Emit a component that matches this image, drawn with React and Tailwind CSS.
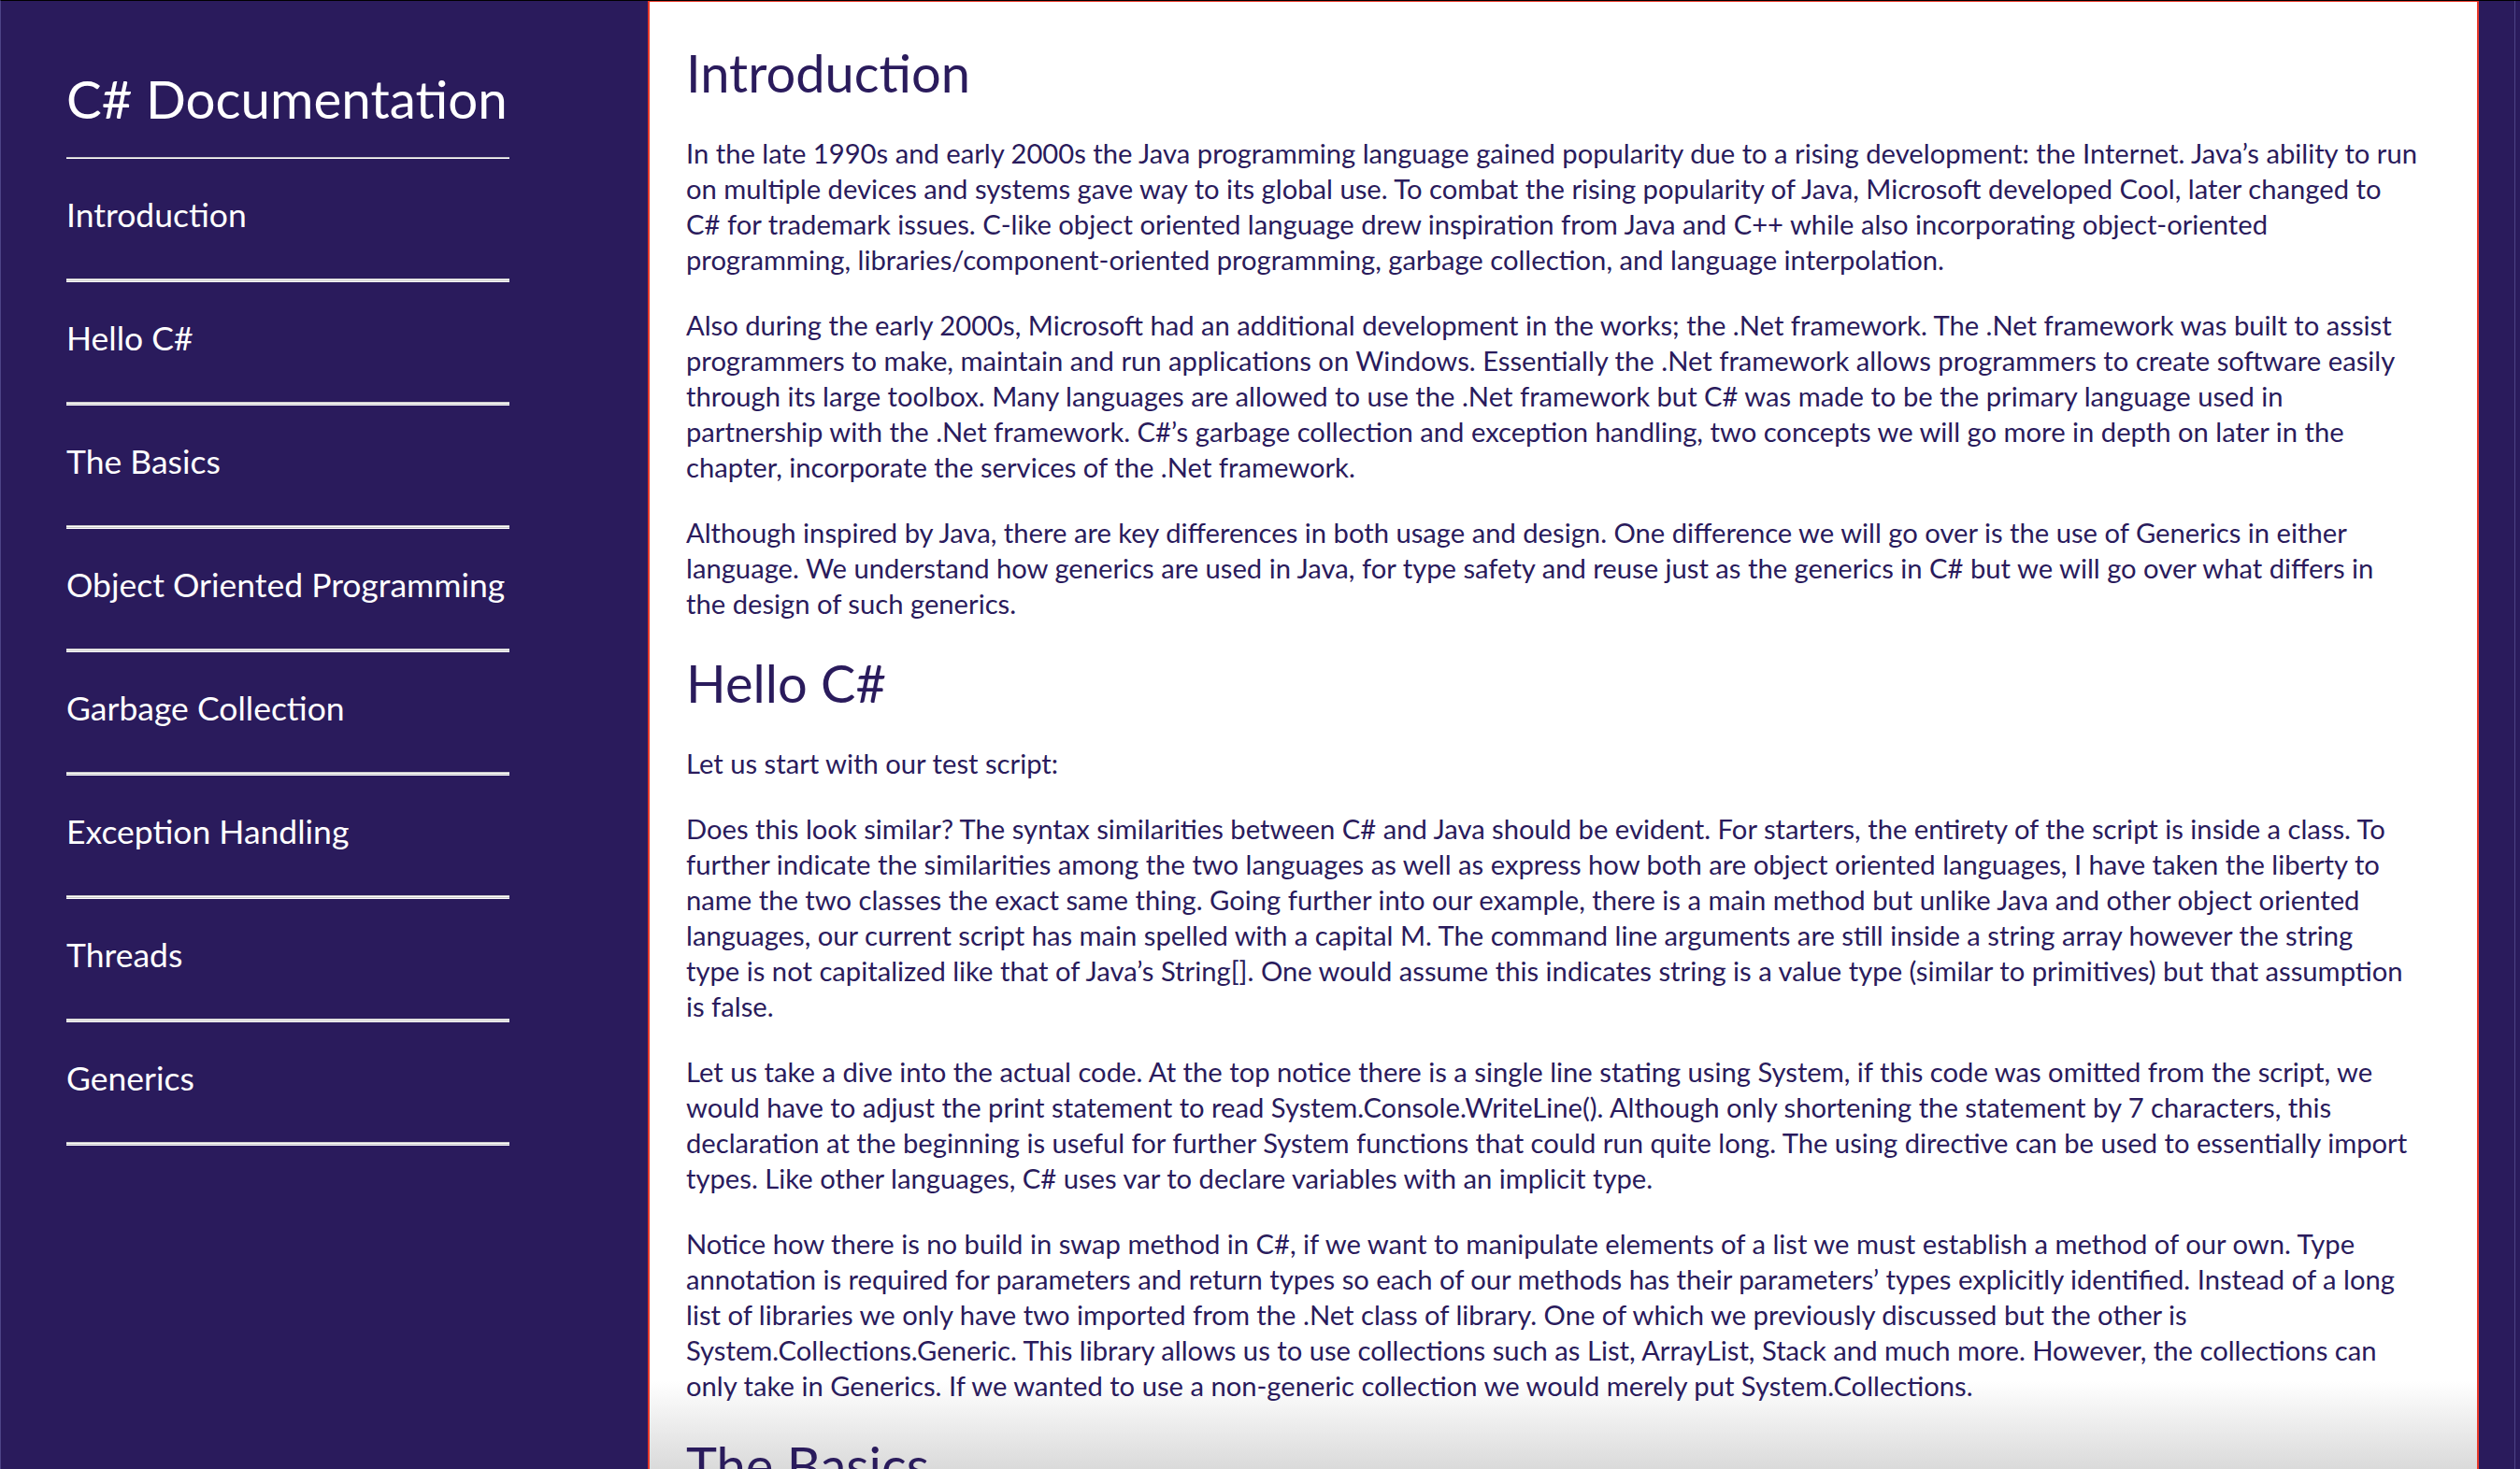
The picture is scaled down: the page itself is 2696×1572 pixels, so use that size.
import React from 'react';

const NAV_ITEMS = [
  'Introduction',
  'Hello C#',
  'The Basics',
  'Object Oriented Programming',
  'Garbage Collection',
  'Exception Handling',
  'Threads',
  'Generics',
];

// Paragraphs are kept as their rendered lines so the wrapping follows the original page
const INTRO = [
  [
    'In the late 1990s and early 2000s the Java programming language gained popularity due to a rising development: the Internet. Java’s ability to run',
    'on multiple devices and systems gave way to its global use. To combat the rising popularity of Java, Microsoft developed Cool, later changed to',
    'C# for trademark issues. C-like object oriented language drew inspiration from Java and C++ while also incorporating object-oriented',
    'programming, libraries/component-oriented programming, garbage collection, and language interpolation.',
  ],
  [
    'Also during the early 2000s, Microsoft had an additional development in the works; the .Net framework. The .Net framework was built to assist',
    'programmers to make, maintain and run applications on Windows. Essentially the .Net framework allows programmers to create software easily',
    'through its large toolbox. Many languages are allowed to use the .Net framework but C# was made to be the primary language used in',
    'partnership with the .Net framework. C#’s garbage collection and exception handling, two concepts we will go more in depth on later in the',
    'chapter, incorporate the services of the .Net framework.',
  ],
  [
    'Although inspired by Java, there are key differences in both usage and design. One difference we will go over is the use of Generics in either',
    'language. We understand how generics are used in Java, for type safety and reuse just as the generics in C# but we will go over what differs in',
    'the design of such generics.',
  ],
];

const HELLO = [
  ['Let us start with our test script:'],
  [
    'Does this look similar? The syntax similarities between C# and Java should be evident. For starters, the entirety of the script is inside a class. To',
    'further indicate the similarities among the two languages as well as express how both are object oriented languages, I have taken the liberty to',
    'name the two classes the exact same thing. Going further into our example, there is a main method but unlike Java and other object oriented',
    'languages, our current script has main spelled with a capital M. The command line arguments are still inside a string array however the string',
    'type is not capitalized like that of Java’s String[]. One would assume this indicates string is a value type (similar to primitives) but that assumption',
    'is false.',
  ],
  [
    'Let us take a dive into the actual code. At the top notice there is a single line stating using System, if this code was omitted from the script, we',
    'would have to adjust the print statement to read System.Console.WriteLine(). Although only shortening the statement by 7 characters, this',
    'declaration at the beginning is useful for further System functions that could run quite long. The using directive can be used to essentially import',
    'types. Like other languages, C# uses var to declare variables with an implicit type.',
  ],
  [
    'Notice how there is no build in swap method in C#, if we want to manipulate elements of a list we must establish a method of our own. Type',
    'annotation is required for parameters and return types so each of our methods has their parameters’ types explicitly identified. Instead of a long',
    'list of libraries we only have two imported from the .Net class of library. One of which we previously discussed but the other is',
    'System.Collections.Generic. This library allows us to use collections such as List, ArrayList, Stack and much more. However, the collections can',
    'only take in Generics. If we wanted to use a non-generic collection we would merely put System.Collections.',
  ],
];

function Section({ title, paragraphs, first }) {
  return (
    <section>
      <h2 className={`${first ? '' : 'mt-[34px]'} mb-[35px] text-[56px] leading-[64px] font-normal`}>{title}</h2>
      {paragraphs.map((lines, i) => (
        <p key={i} className="mb-[32px] text-[29.2px] leading-[38px] whitespace-nowrap">
          {lines.map((line, j) => (
            <React.Fragment key={j}>
              {j > 0 && <br />}
              {line}
            </React.Fragment>
          ))}
        </p>
      ))}
    </section>
  );
}

export default function App() {
  return (
    <div
      className="flex h-[1572px] w-full overflow-hidden border-t border-t-black border-l border-l-[#4d4386] bg-[#2a1b5c]"
      style={{ fontFamily: 'Lato, "Open Sans", sans-serif' }}
    >
      {/* Sidebar */}
      <nav className="w-[692px] shrink-0 pl-[70px] pr-[148px] text-white">
        <h1 className="mt-[72px] mb-[31px] text-[56.5px] leading-[64px] font-normal whitespace-nowrap">C# Documentation</h1>
        <div className="h-[2px] border-t border-t-[#c4c4c4] bg-white" />
        {NAV_ITEMS.map((item) => (
          <div key={item}>
            <a href="#" className="block pt-[38px] pb-[46px] text-[35.5px] leading-[44px] whitespace-nowrap">
              {item}
            </a>
            <div className="h-[2px] border-t border-t-[#c4c4c4] bg-white" />
            <div className="h-[2px] border-t border-t-[#c4c4c4] bg-white" />
          </div>
        ))}
      </nav>

      {/* Main content */}
      <main className="flex-1 overflow-hidden border-t border-l-2 border-[#e8392a] bg-linear-to-b from-white from-94% to-[#dadada] pt-[44px] pl-[39px] pr-[30px] text-[#2a1b5c]">
        <Section title="Introduction" paragraphs={INTRO} first />
        <Section title="Hello C#" paragraphs={HELLO} />
        <Section title="The Basics" paragraphs={[]} />
      </main>

      {/* Right edge */}
      <div className="flex w-[46px] shrink-0">
        <div className="flex-1 border-l-2 border-l-[#e8392a]" />
        <div className="w-px bg-[#4d4386]" />
        <div className="w-[5px]" />
      </div>
    </div>
  );
}
